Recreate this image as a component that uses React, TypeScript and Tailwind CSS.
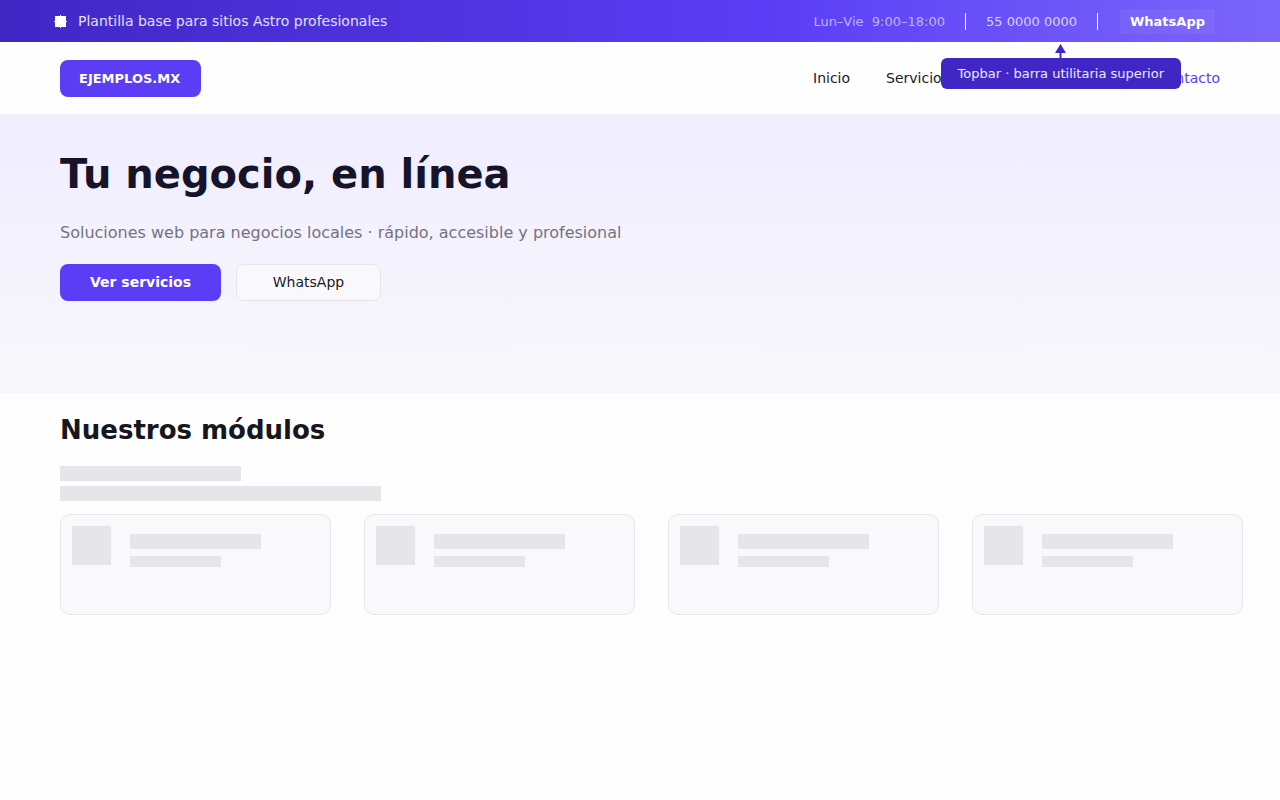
const MODULOS = ['modulo-1', 'modulo-2', 'modulo-3', 'modulo-4'];

function Topbar() {
  return (
    <div className="flex h-[42px] items-center justify-between bg-linear-to-r from-[#4027c4] via-[#5b3df5] via-60% to-[#7c65fa] pl-[54px] pr-[65px] text-white">
      <div className="flex items-center gap-[11px]">
        <svg width="13" height="13" viewBox="0 0 13 13" fill="#fff" shapeRendering="crispEdges" aria-hidden="true">
          <rect x="1" y="1" width="11" height="11" />
          <rect x="6" y="0" width="1" height="13" />
          <rect x="0" y="6" width="13" height="1" />
        </svg>
        <p className="text-sm text-white/85">Plantilla base para sitios Astro profesionales</p>
      </div>

      <div className="flex items-center text-[13px] leading-[21px]">
        <span className="whitespace-pre text-white/60">{'Lun–Vie  9:00–18:00'}</span>
        <span className="mx-5 h-[17px] w-px bg-white" />
        <a href="tel:5500000000" className="text-white/75">55 0000 0000</a>
        <span className="ml-5 mr-[22px] h-[17px] w-px bg-white" />
        <a href="#whatsapp" className="bg-white/5 px-2.5 py-0.5 font-bold">WhatsApp</a>
      </div>
    </div>
  );
}

function Tooltip() {
  return (
    <div role="tooltip" className="absolute right-[99px] top-0.5 z-10 flex flex-col items-center">
      <svg width="11" height="14" viewBox="0 0 11 14" fill="#4027c4" aria-hidden="true">
        <path d="M5.5 0L11 9H0z" />
        <rect x="4.5" y="8" width="2" height="6" />
      </svg>
      <p className="rounded-md bg-[#4027c4] px-[17px] py-[5px] text-[13px] leading-[21px] text-white/90">
        Topbar · barra utilitaria superior
      </p>
    </div>
  );
}

function Navbar() {
  return (
    <header className="relative flex h-[72px] items-center justify-between px-15">
      <a
        href="#inicio"
        className="rounded-lg bg-[#5b3df5] py-2 pr-[21px] pl-[19px] text-[13px] leading-[21px] font-bold text-white"
      >
        EJEMPLOS.MX
      </a>
      <nav className="flex items-center gap-9 text-sm text-[#1a1a1f]">
        <a href="#inicio">Inicio</a>
        <a href="#servicios">Servicios</a>
        <a href="#contacto" className="ml-43 text-[#5b3df5]">Contacto</a>
      </nav>
      <Tooltip />
    </header>
  );
}

function Hero() {
  return (
    <section className="bg-linear-to-b from-[#f0edff] to-[#f8f8fc] px-15 pt-9 pb-[93px]">
      <h1 className="text-[40px] leading-12 font-bold text-[#16142a]">Tu negocio, en línea</h1>
      <p className="mt-[23px] text-base text-[#74727f]">
        Soluciones web para negocios locales · rápido, accesible y profesional
      </p>
      <div className="mt-[19px] flex gap-[15px]">
        <button className="w-[161px] rounded-lg bg-[#5b3df5] py-2 text-sm leading-[21px] font-bold text-white">
          Ver servicios
        </button>
        <button className="w-[145px] rounded-lg border border-[#e6e5ea] bg-[#f9f9fc] text-sm leading-[21px] text-[#1a1a1f]">
          WhatsApp
        </button>
      </div>
    </section>
  );
}

function ModuloCard() {
  return (
    <li className="flex h-[101px] gap-[19px] rounded-[10px] border border-[#e6e5ea] bg-[#f9f9fc] p-[11px]">
      <div className="size-[39px] shrink-0 bg-[#e6e5ea]" />
      <div className="flex flex-1 flex-col gap-[7px] pt-2">
        <div className="h-[15px] w-[131px] bg-[#e6e5ea]" />
        <div className="h-[11px] w-[91px] bg-[#e6e5ea]" />
      </div>
    </li>
  );
}

function Modulos() {
  return (
    <section className="pt-5 pr-[37px] pl-15">
      <h2 className="text-[26px] leading-8 font-bold text-[#17161d]">Nuestros módulos</h2>
      {/* Texto placeholder */}
      <div className="mt-5 h-[15px] w-[181px] bg-[#e6e5ea]" />
      <div className="mt-[5px] h-[15px] w-[321px] bg-[#e6e5ea]" />
      <ul className="mt-[13px] grid grid-cols-4 gap-[33px]">
        {MODULOS.map((id) => (
          <ModuloCard key={id} />
        ))}
      </ul>
    </section>
  );
}

export default function App() {
  return (
    <div className="min-h-screen bg-[#fefefe] font-['DejaVu_Sans',sans-serif]">
      <Topbar />
      <Navbar />
      <main>
        <Hero />
        <Modulos />
      </main>
    </div>
  );
}
